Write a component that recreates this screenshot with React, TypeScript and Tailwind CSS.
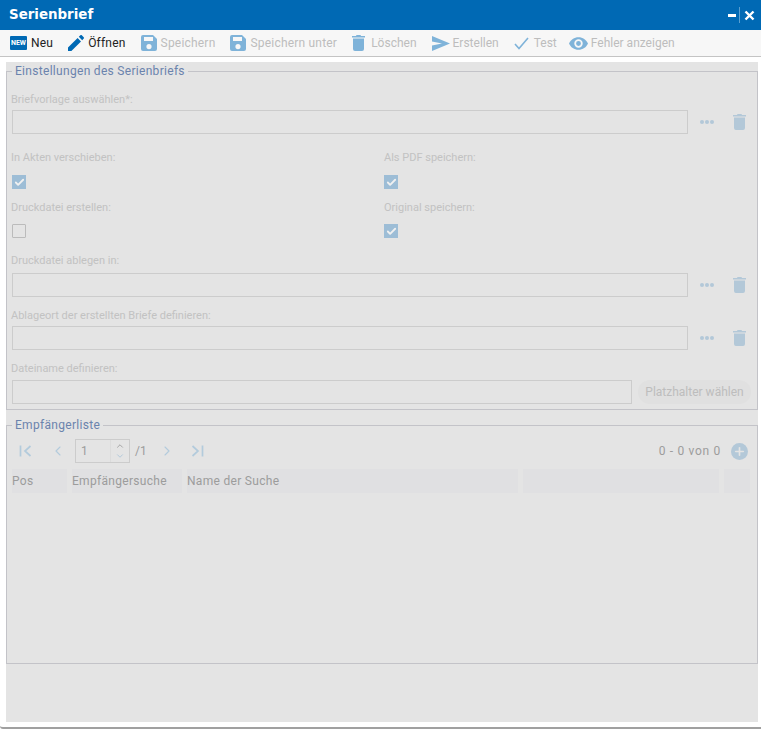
import { Check, ChevronDown, ChevronLeft, ChevronRight, ChevronUp, Plus } from 'lucide-react';

const FONT = 'font-["Roboto","Liberation_Sans",sans-serif]';

function SaveIcon() {
  return (
    <svg width="16" height="16" viewBox="0 0 16 16" className="shrink-0">
      <path fillRule="evenodd" fill="#7fb3d9" d="M2 0h10l4 4v10a2 2 0 0 1-2 2H2a2 2 0 0 1-2-2V2a2 2 0 0 1 2-2zm1 2v4h9V2H3zm5 7a2.6 2.6 0 1 0 0 5.2A2.6 2.6 0 0 0 8 9z" />
    </svg>
  );
}

function TrashIcon({ color = '#7fb3d9' }: { color?: string }) {
  return (
    <svg width="13" height="16" viewBox="0 0 13 16" className="shrink-0">
      <path fill={color} d="M4.5 0h4l.5 1h4v1.5H0V1h4zM1 3.5h11V14a2 2 0 0 1-2 2H3a2 2 0 0 1-2-2z" />
    </svg>
  );
}

function PagerEdge({ flip }: { flip?: boolean }) {
  return (
    <svg width="13" height="12" viewBox="0 0 13 12" className={`shrink-0 ${flip ? 'rotate-180' : ''}`}>
      <path d="M1.5 0.5v11M11.500 1l-5.500 5 5.500 5" fill="none" stroke="#b3cbdc" strokeWidth="1.700" />
    </svg>
  );
}

function ToolButton({ icon, label, enabled, gap = 'gap-[4px]', className = '' }: { icon: React.ReactNode; label: string; enabled?: boolean; gap?: string; className?: string }) {
  return (
    <div className={`flex items-center ${gap} ${enabled ? 'text-[#222]' : 'text-[#bdbdbd]'} ${className}`}>
      {icon}
      <span>{label}</span>
    </div>
  );
}

function Legend({ children }: { children: React.ReactNode }) {
  return <legend className="px-[3px] text-[12px] leading-[14px] tracking-[0.3px] text-[#6b83ad]">{children}</legend>;
}

function FieldLabel({ children, className = '' }: { children: React.ReactNode; className?: string }) {
  return <div className={`-ml-[1px] text-[11px] leading-[14px] text-[#c2c2c2] ${className}`}>{children}</div>;
}

function TextBox({ className = 'flex-1' }: { className?: string }) {
  return <div className={`h-[24px] border border-[#cccccc] ${className}`} />;
}

function FileRow() {
  return (
    <div className="flex items-center">
      <TextBox />
      <div className="ml-[12px] flex w-[14px] justify-between">
        <span className="h-[4px] w-[4px] rounded-full bg-[#b3c8d8]" />
        <span className="h-[4px] w-[4px] rounded-full bg-[#b3c8d8]" />
        <span className="h-[4px] w-[4px] rounded-full bg-[#b3c8d8]" />
      </div>
      <div className="ml-[19px] mr-[6px] flex">
        <TrashIcon color="#b3c8d8" />
      </div>
    </div>
  );
}

function CheckBox({ checked }: { checked?: boolean }) {
  if (!checked) return <div className="h-[14px] w-[14px] rounded-[1px] border border-[#bbbbbb]" />;
  return (
    <div className="flex h-[14px] w-[14px] items-center justify-center bg-[#9dbdd6]">
      <Check size={11} strokeWidth={4} color="#f0f0f0" />
    </div>
  );
}

function HeadCell({ className, children }: { className: string; children?: React.ReactNode }) {
  return <div className={`flex h-[24px] items-center bg-[#e0e0e2] text-[12px] tracking-[0.3px] text-[#9c9c9c] ${className}`}>{children}</div>;
}

export default function App() {
  return (
    <div className={`flex h-[729px] w-[761px] flex-col overflow-hidden rounded-bl-[3px] border-b-2 border-[#a0a0a0] bg-white ${FONT}`}>
      <div className="flex h-[30px] shrink-0 items-center justify-between bg-[#0069b4] pl-[9px] pr-[6px]">
        <span className="font-['DejaVu_Sans',sans-serif] text-[13.4px] font-bold leading-none text-white">Serienbrief</span>
        <div className="flex items-center">
          <span className="h-[3px] w-[8px] bg-white" />
          <span className="ml-[3px] h-[16px] w-px bg-[#5a9fd0]" />
          <svg width="11" height="11" viewBox="0 0 11 11" className="ml-[4px]">
            <path d="M1.5 1.5l8 8M9.5 1.5l-8 8" stroke="#fff" strokeWidth="2.4" />
          </svg>
        </div>
      </div>

      <div className="flex h-[27px] shrink-0 items-center gap-[15px] border-b border-[#c4c4c4] bg-[#f7f7f7] pl-[10px] text-[12px] tracking-[0.2px]">
        <ToolButton
          enabled
          label="Neu"
          icon={
            <span className="flex h-[14px] w-[17px] items-center justify-center rounded-[1px] bg-[#0069b4] text-[7px] font-bold leading-none tracking-normal text-white">NEW</span>
          }
        />
        <ToolButton
          enabled
          label="Öffnen"
          icon={
            <svg width="16" height="16" viewBox="0 0 16 16" className="shrink-0">
              <path fill="#0069b4" d="M0 16v-3.4L9.6 3l3.4 3.4L3.4 16zM10.8 1.8 12.4.3a1 1 0 0 1 1.4 0l1.9 1.9a1 1 0 0 1 0 1.4L14.200 5.200z" />
            </svg>
          }
        />
        <ToolButton label="Speichern" icon={<SaveIcon />} />
        <ToolButton label="Speichern unter" icon={<SaveIcon />} />
        <ToolButton label="Löschen" gap="gap-[6px]" className="tracking-normal" icon={<TrashIcon />} />
        <ToolButton
          label="Erstellen"
          gap="gap-[3px]"
          className="tracking-normal"
          icon={
            <svg width="18" height="15" viewBox="0 0 18 15" className="shrink-0">
              <path fill="#7fb3d9" d="M0 0l18 7.500L0 15V9.500l10-2-10-2z" />
            </svg>
          }
        />
        <ToolButton
          label="Test"
          gap="gap-[5px]"
          className="tracking-normal"
          icon={
            <svg width="15" height="13" viewBox="0 0 15 13" className="shrink-0">
              <path d="M1 7l4 4.500L14 1" fill="none" stroke="#7fb3d9" strokeWidth="1.600" />
            </svg>
          }
        />
        <ToolButton
          label="Fehler anzeigen"
          gap="gap-[3px]"
          className="-ml-[3px] tracking-normal"
          icon={
            <svg width="19" height="13" viewBox="0 0 18 12" className="shrink-0">
              <path fillRule="evenodd" fill="#7fb3d9" d="M9 0c4 0 7.500 2.500 9 6-1.500 3.500-5 6-9 6S1.500 9.500 0 6c1.500-3.500 5-6 9-6zm0 2a4 4 0 1 0 0 8 4 4 0 0 0 0-8zm0 1.700a2.300 2.300 0 1 1 0 4.600 2.300 2.300 0 0 1 0-4.600z" />
            </svg>
          }
        />
      </div>

      <div className="mb-[5px] ml-[6px] mr-[3px] mt-[5px] flex flex-1 flex-col bg-[#e4e4e4] pt-[2px]">
        <fieldset className="h-[346px] border border-[#c3c3c8] px-[5px] pb-[4px]">
          <Legend>Einstellungen des Serienbriefs</Legend>
          <FieldLabel className="mt-[15px]">Briefvorlage auswählen*:</FieldLabel>
          <div className="mt-[3px]">
            <FileRow />
          </div>

          <div className="mt-[17px] grid grid-cols-[372px_1fr]">
            <div>
              <FieldLabel>In Akten verschieben:</FieldLabel>
              <div className="mt-[10px]"><CheckBox checked /></div>
              <FieldLabel className="mt-[12px]">Druckdatei erstellen:</FieldLabel>
              <div className="mt-[9px]"><CheckBox /></div>
            </div>
            <div>
              <div className="ml-[1px]"><FieldLabel>Als PDF speichern:</FieldLabel></div>
              <div className="mt-[10px]"><CheckBox checked /></div>
              <div className="ml-[1px]"><FieldLabel className="mt-[12px]">Original speichern:</FieldLabel></div>
              <div className="mt-[9px]"><CheckBox checked /></div>
            </div>
          </div>

          <FieldLabel className="mt-[16px]">Druckdatei ablegen in:</FieldLabel>
          <div className="mt-[5px]">
            <FileRow />
          </div>
          <FieldLabel className="mt-[12px]">Ablageort der erstellten Briefe definieren:</FieldLabel>
          <div className="mt-[3px]">
            <FileRow />
          </div>
          <FieldLabel className="mt-[12px]">Dateiname definieren:</FieldLabel>
          <div className="mt-[4px] flex items-center">
            <TextBox />
            <div className="ml-[6px] mr-[1px] flex h-[24px] w-[113px] items-center justify-center rounded-[12px] bg-[#e0e0e0] text-[12px] text-[#bdbdbd]">
              Platzhalter wählen
            </div>
          </div>
        </fieldset>

        <fieldset className="mt-[8px] h-[246px] border border-[#c3c3c8] px-[5px]">
          <Legend>Empfängerliste</Legend>
          <div className="mt-[7px] flex h-[24px] items-center text-[12px] text-[#9c9c9c]">
            <div className="ml-[7px] flex"><PagerEdge /></div>
            <ChevronLeft size={16} strokeWidth={1.700} color="#b3cbdc" className="ml-[18px]" />
            <div className="ml-[9px] flex h-[24px] w-[55px] border border-[#cccccc]">
              <span className="flex-1 pl-[5px] leading-[22px]">1</span>
              <div className="flex w-[19px] flex-col items-center justify-center border-l border-[#dcdcdc]">
                <ChevronUp size={10} color="#999" />
                <ChevronDown size={10} color="#a9c4d9" />
              </div>
            </div>
            <span className="ml-[5px]">/1</span>
            <ChevronRight size={16} strokeWidth={1.700} color="#b3cbdc" className="ml-[12px]" />
            <div className="ml-[16px] flex"><PagerEdge flip /></div>
            <span className="ml-auto tracking-[0.7px]">0 - 0 von 0</span>
            <div className="ml-[10px] mr-[4px] flex h-[17px] w-[17px] items-center justify-center rounded-full bg-[#b3c8d8]">
              <Plus size={13} strokeWidth={3} color="#e4e4e4" />
            </div>
          </div>
          <div className="mt-[6px] flex gap-[5px]">
            <HeadCell className="w-[55px]">Pos</HeadCell>
            <HeadCell className="w-[110px]">Empfängersuche</HeadCell>
            <HeadCell className="w-[331px]">Name der Suche</HeadCell>
            <HeadCell className="w-[196px]" />
            <HeadCell className="w-[26px]" />
          </div>
        </fieldset>
      </div>
    </div>
  );
}
